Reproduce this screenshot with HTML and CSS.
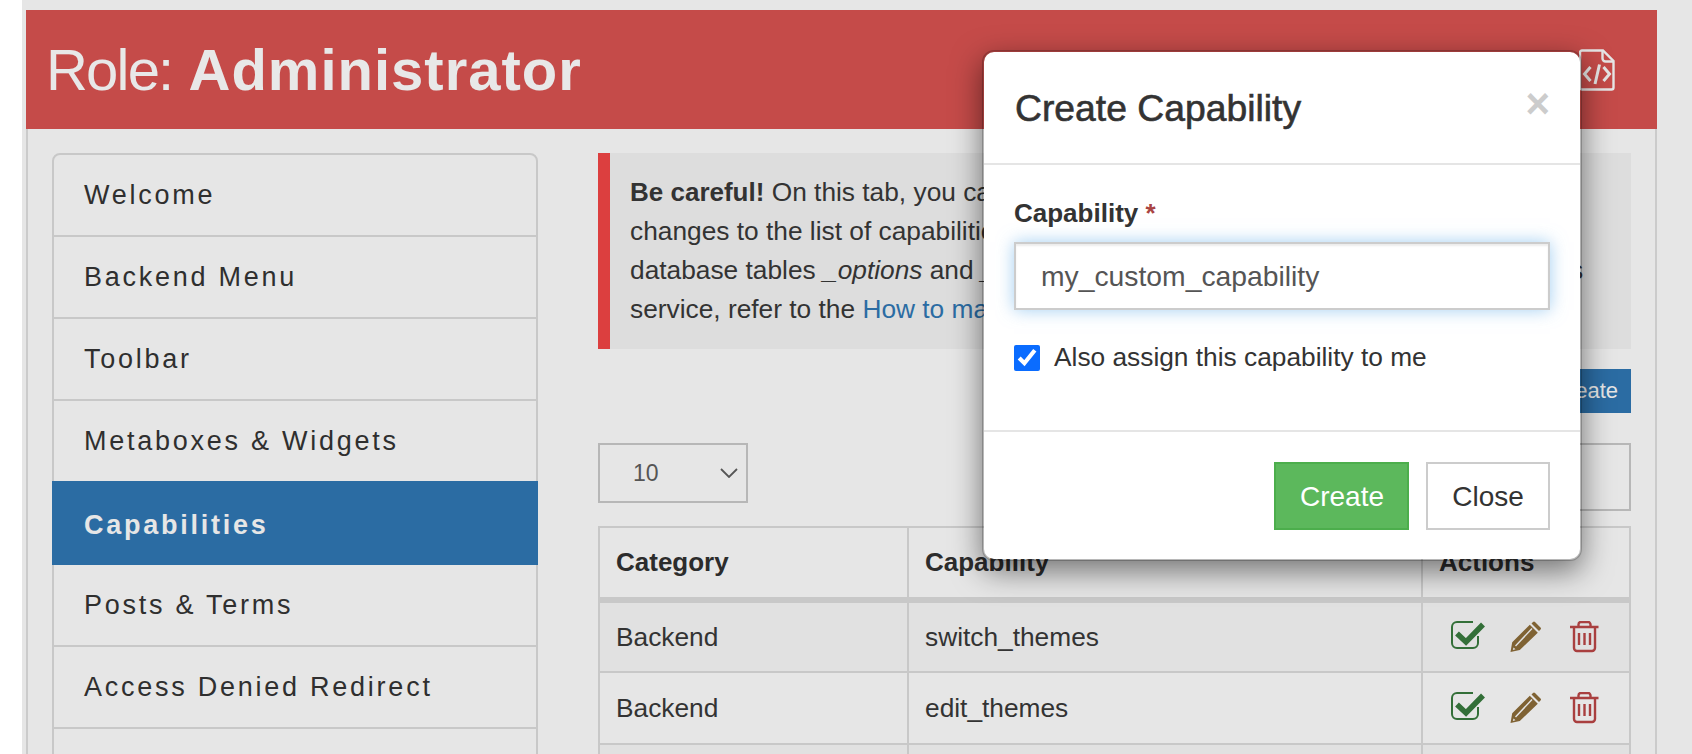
FILE: index.html
```html
<!DOCTYPE html>
<html lang="en">
<head>
  <meta charset="UTF-8" />
  <meta name="viewport" content="width=device-width, initial-scale=1" />
  <title>Role: Administrator</title>
  <link rel="stylesheet" href="styles.css">
</head>
<body>
  <div class="page">
    <div class="frame">
      <header class="role-header">
        <h1 class="role-title"><span class="role-label">Role:</span> <strong>Administrator</strong></h1>
        <svg class="export-icon" viewBox="0 0 36 42" fill="none" stroke="#e6e6e6" stroke-width="2.4">
          <path d="M3 1.500H24L34.500 12V38.500a2 2 0 0 1-2 2H3a2 2 0 0 1-2-2V3.500a2 2 0 0 1 2-2Z" />
          <path d="M23.500 1.500V9.500a3 3 0 0 0 3 3H34.500" />
          <path d="M11.500 18L5.500 25L11.500 32M24.500 18L30.500 25L24.500 32M20.500 15.500L16 35" stroke-width="3" />
        </svg>
      </header>

      <div class="layout">
        <ul class="side-nav">
          <li>Welcome</li>
          <li>Backend Menu</li>
          <li>Toolbar</li>
          <li>Metaboxes &amp; Widgets</li>
          <li class="active">Capabilities</li>
          <li>Posts &amp; Terms</li>
          <li>Access Denied Redirect</li>
          <li>Login Redirect</li>
        </ul>

        <main class="content">
          <div class="notice">
            <strong>Be careful!</strong> On this tab, you can manage the capabilities of the selected role. Any<br>
            changes to the list of capabilities are saved immediately and are stored in your<br>
            database tables <em>_options</em> and <em>_usermeta</em>. If not sure, consult any support services<br>
            service, refer to the <a href="#">How to manage capabilities</a> article first.
          </div>

          <div class="toolbar">
            <button class="btn-create" type="button">Create</button>
          </div>

          <div class="table-controls">
            <div class="page-size">
              <span>10</span>
              <svg class="chevron" viewBox="0 0 18 10" fill="none" stroke="#555" stroke-width="1.800"><path d="M1 1L9 9L17 1" /></svg>
            </div>
            <div class="search-box"></div>
          </div>

          <table class="caps-table">
            <thead>
              <tr><th class="col-category">Category</th><th class="col-capability">Capability</th><th>Actions</th></tr>
            </thead>
            <tbody>
              <tr>
                <td>Backend</td>
                <td>switch_themes</td>
                <td>
                  <div class="actions">
                    <svg viewBox="0 0 34 32" fill="none"><path class="ico-check" d="M22 1H6a5 5 0 0 0-5 5V22a5 5 0 0 0 5 5H22a5 5 0 0 0 5-5V15" stroke-width="2" /><path class="ico-check" d="M6 12.500L15 21L32 3.500" stroke-width="5.500" /></svg>
                    <svg viewBox="0 0 34 32"><path class="ico-pencil" d="M22.500 2.500L24 1Q25 0 26 1L31.500 6.500Q32.500 7.500 31.500 8.500L30 10ZM3.200 21.300L20.800 3.700L28.800 11.700L10.800 29L1.500 31ZM6 24.500L7 25.500L23.500 8L22.500 7ZM4.500 26.500L3.800 29L6.500 28.300Z" fill-rule="evenodd" /></svg>
                    <svg viewBox="0 0 34 32" fill="none"><path class="ico-trash" d="M3 6H31.500M11.500 6V3.500A2.500 2.500 0 0 1 14 1H21A2.500 2.500 0 0 1 23.500 3.500V6M7 6V27a3 3 0 0 0 3 3H25a3 3 0 0 0 3-3V6M12 12V24M17.500 12V24M23 12V24" stroke-width="2.400" /></svg>
                  </div>
                </td>
              </tr>
              <tr>
                <td>Backend</td>
                <td>edit_themes</td>
                <td>
                  <div class="actions">
                    <svg viewBox="0 0 34 32" fill="none"><path class="ico-check" d="M22 1H6a5 5 0 0 0-5 5V22a5 5 0 0 0 5 5H22a5 5 0 0 0 5-5V15" stroke-width="2" /><path class="ico-check" d="M6 12.500L15 21L32 3.500" stroke-width="5.500" /></svg>
                    <svg viewBox="0 0 34 32"><path class="ico-pencil" d="M22.500 2.500L24 1Q25 0 26 1L31.500 6.500Q32.500 7.500 31.500 8.500L30 10ZM3.200 21.300L20.800 3.700L28.800 11.700L10.800 29L1.500 31ZM6 24.500L7 25.500L23.500 8L22.500 7ZM4.500 26.500L3.800 29L6.500 28.300Z" fill-rule="evenodd" /></svg>
                    <svg viewBox="0 0 34 32" fill="none"><path class="ico-trash" d="M3 6H31.500M11.500 6V3.500A2.500 2.500 0 0 1 14 1H21A2.500 2.500 0 0 1 23.500 3.500V6M7 6V27a3 3 0 0 0 3 3H25a3 3 0 0 0 3-3V6M12 12V24M17.500 12V24M23 12V24" stroke-width="2.400" /></svg>
                  </div>
                </td>
              </tr>
              <tr><td>Backend</td><td>activate_plugins</td><td></td></tr>
            </tbody>
          </table>
        </main>
      </div>
    </div>

    <div class="modal">
      <div class="modal-header">
        <h2 class="modal-title">Create Capability</h2>
        <span class="modal-close">&times;</span>
      </div>
      <div class="modal-body">
        <label class="field-label" for="capability">Capability <span class="required">*</span></label>
        <input class="field-input" id="capability" type="text" value="my_custom_capability" />
        <label class="check-row">
          <input type="checkbox" checked />
          <span>Also assign this capability to me</span>
        </label>
      </div>
      <div class="modal-footer">
        <button class="btn btn-success" type="button">Create</button>
        <button class="btn btn-default" type="button">Close</button>
      </div>
    </div>
  </div>
</body>
</html>
```

FILE: styles.css
```css
* {
  box-sizing: border-box;
}
html, body {
  height: 754px;
  margin: 0;
  overflow: hidden;
}
body {
  background: #fff;
  color: #333;
  font-family: 'Liberation Sans', Arial, sans-serif;
  font-size: 26.3px;
  line-height: 39px;
}
strong {
  font-size: 26px;
}
.page {
  position: relative;
  height: 754px;
  margin-left: 22px;
  padding: 10px 35px 0 4px;
  background: #e6e6e6;
  overflow: hidden;
}
.frame {
  height: 900px;
  border: 2px solid #cbcbcb;
  border-top: none;
}

/* header */
.role-header {
  display: flex;
  justify-content: space-between;
  align-items: center;
  height: 119px;
  margin: 0 -2px;
  padding: 0 42px 0 20px;
  background: #c54b49;
}
.role-title {
  margin: 0;
  color: #e8e8e8;
  font-size: 58px;
  font-weight: 400;
  line-height: 70px;
}
.role-label {
  letter-spacing: -1.800px;
}
.role-title strong {
  font-size: 58px;
  letter-spacing: 1px;
}
.export-icon {
  width: 36px;
  height: 42px;
}

/* columns */
.layout {
  display: grid;
  grid-template-columns: 486px minmax(0, 1fr);
  column-gap: 60px;
  padding: 24px 24px 0;
}
.side-nav {
  margin: 0;
  padding: 0;
  list-style: none;
  border: 2px solid #c8c8c8;
  border-radius: 8px 8px 0 0;
  font-size: 27px;
  letter-spacing: 2.750px;
  color: #2f2f2f;
}
.side-nav li {
  height: 82px;
  padding: 0 30px;
  border-bottom: 2px solid #c8c8c8;
  line-height: 80px;
}
.side-nav .active {
  height: 84px;
  margin: -2px -2px 0;
  padding: 0 32px;
  border-bottom-color: #2b6ca3;
  background: #2b6ca3;
  color: #e6e6e6;
  font-weight: 700;
  line-height: 88px;
}

/* notice */
.notice {
  height: 196px;
  padding: 20px 0 0 20px;
  border-left: 12px solid #dc3f3f;
  background: #ddd;
  white-space: nowrap;
  overflow: hidden;
}
.notice a {
  color: #2b6ca3;
  text-decoration: none;
}
.toolbar {
  display: flex;
  justify-content: flex-end;
  margin-top: 20px;
}
.btn-create {
  height: 44px;
  padding: 0 13px;
  border: none;
  background: #2b6ca3;
  color: #e6e6e6;
  font: 22px 'Liberation Sans', Arial, sans-serif;
}
.table-controls {
  display: flex;
  justify-content: space-between;
  align-items: flex-start;
  margin-top: 30px;
}
.page-size {
  display: flex;
  justify-content: space-between;
  align-items: center;
  width: 150px;
  height: 60px;
  padding: 0 8px 0 33px;
  border: 2px solid #b7b7b7;
  color: #555;
  font-size: 23px;
}
.chevron {
  width: 18px;
  height: 10px;
}
.search-box {
  width: 320px;
  height: 68px;
  border: 2px solid #b7b7b7;
}

/* table */
.caps-table {
  width: 100%;
  margin-top: 15px;
  border-collapse: collapse;
  table-layout: fixed;
}
.caps-table th,
.caps-table td {
  height: 72px;
  padding: 0 16px;
  border: 2px solid #c8c8c8;
  text-align: left;
}
.caps-table th {
  height: 73px;
  border-bottom-width: 6px;
  color: #2c2c2c;
  font-size: 26px;
}
.col-category {
  width: 309px;
}
.col-capability {
  width: 514px;
}
.caps-table tbody tr:nth-child(odd) {
  background: #e1e1e1;
}
.actions {
  display: flex;
  justify-content: center;
  align-items: center;
  gap: 24px;
}
.actions svg {
  width: 34px;
  height: 32px;
}
.ico-check {
  stroke: #336f38;
}
.ico-pencil {
  fill: #7f6233;
}
.ico-trash {
  stroke: #a93f3f;
}

/* modal */
.modal {
  position: absolute;
  top: 50px;
  left: 960px;
  width: 600px;
  height: 511px;
  border: 2px solid rgba(0, 0, 0, 0.2);
  border-radius: 12px;
  background: #fff;
  background-clip: padding-box;
  box-shadow: 0 10px 30px rgba(0, 0, 0, 0.5);
}
.modal-header {
  display: flex;
  justify-content: space-between;
  align-items: center;
  height: 113px;
  padding: 0 30px 0 31px;
  border-bottom: 2px solid #e5e5e5;
}
.modal-title {
  margin: 2px 0 0;
  font-size: 37.300px;
  font-weight: 400;
  -webkit-text-stroke: 0.6px #333;
}
.modal-close {
  margin-top: -8px;
  color: #ccc;
  font-size: 42px;
  font-weight: 700;
  line-height: 42px;
}
.modal-body {
  height: 265px;
  padding: 29px 30px 0;
}
.field-label {
  display: block;
  font-size: 26px;
  font-weight: 700;
  margin-bottom: 9px;
}
.required {
  color: #a94442;
}
.field-input {
  display: block;
  width: 100%;
  height: 68px;
  padding: 0 25px;
  border: 2px solid #ccc;
  outline: none;
  color: #555;
  font: 28.300px 'Liberation Sans', Arial, sans-serif;
  box-shadow: inset 0 2px 2px rgba(0, 0, 0, 0.075), 0 0 16px rgba(102, 175, 233, 0.6);
}
.check-row {
  display: flex;
  align-items: center;
  gap: 14px;
  margin-top: 28px;
}
.check-row input {
  width: 26px;
  height: 26px;
  margin: 0;
  accent-color: #0a6cff;
}
.modal-footer {
  display: flex;
  justify-content: flex-end;
  gap: 17px;
  padding: 30px;
  border-top: 2px solid #e5e5e5;
}
.btn {
  height: 68px;
  padding: 2px 24px 0;
  border: 2px solid #ccc;
  font: 28px 'Liberation Sans', Arial, sans-serif;
}
.btn-success {
  width: 135px;
  border-color: #4cae4c;
  background: #5cb85c;
  color: #fff;
}
.btn-default {
  width: 124px;
  background: #fff;
  color: #333;
}
```
